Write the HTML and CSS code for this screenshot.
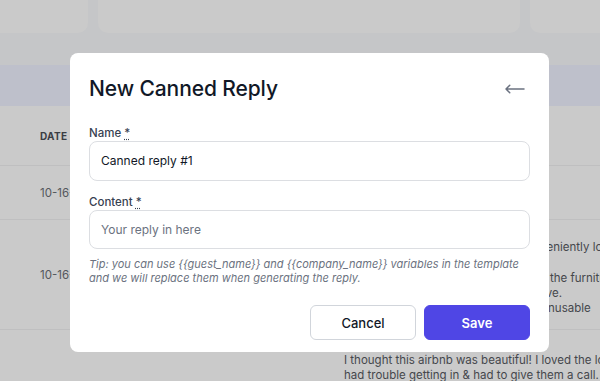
FILE: index.html
```html
<!DOCTYPE html>
<html lang="en">
<head>
<meta charset="utf-8">
<title>New Canned Reply</title>
<link rel="stylesheet" href="styles.css">
</head>
<body>
<div class="page">
  <div class="cards">
    <div class="card card-a"></div>
    <div class="card card-b"></div>
    <div class="card card-c"></div>
  </div>
  <div class="band"></div>
  <div class="table">
    <div class="row row-head">
      <div class="cell-date head">DATE</div>
      <div class="cell-review"></div>
    </div>
    <div class="row row-1">
      <div class="cell-date">10-16-2023</div>
      <div class="cell-review"></div>
    </div>
    <div class="row row-2">
      <div class="cell-date">10-16-2023</div>
      <div class="cell-review">
        <p class="line">The host was nice and the flat's conveniently located</p>
        <p class="line">near the beach.</p>
        <p class="line">Please be aware, though that most of the furniture is old</p>
        <p class="line">and the bathroom needs some real love.</p>
        <p class="line">The washing machine is completely unusable</p>
      </div>
    </div>
    <div class="row row-3">
      <div class="cell-date"></div>
      <div class="cell-review">
        <p class="line">I thought this airbnb was beautiful! I loved the location. We</p>
        <p class="line">had trouble getting in &amp; had to give them a call. Once</p>
      </div>
    </div>
  </div>

  <div class="modal">
    <div class="modal-header">
      <h2 class="modal-title">New Canned Reply</h2>
      <button class="back-btn" type="button" aria-label="Back">
        <svg width="24" height="24" viewBox="0 0 24 24" fill="none" stroke="#6b7280" stroke-width="1.5" stroke-linecap="round" stroke-linejoin="round"><path d="M6.75 15.75L3 12m0 0l3.75-3.75M3 12h18"/></svg>
      </button>
    </div>
    <div class="form">
      <div class="field">
        <label class="label">Name <abbr title="required">*</abbr></label>
        <div class="input input-value">Canned reply #1</div>
      </div>
      <div class="field field-2">
        <label class="label">Content <abbr title="required">*</abbr></label>
        <div class="input input-placeholder">Your reply in here</div>
      </div>
      <p class="tip">Tip: you can use {{guest_name}} and {{company_name}} variables in the template<br>and we will replace them when generating the reply.</p>
      <div class="actions">
        <button class="btn btn-cancel" type="button">Cancel</button>
        <button class="btn btn-save" type="button">Save</button>
      </div>
    </div>
  </div>
</div>
</body>
</html>
```

FILE: styles.css
```css
* { box-sizing: border-box; }
html, body { margin: 0; padding: 0; }
body {
  width: 600px;
  height: 381px;
  overflow: hidden;
  background: #c5c6c8;
  font-family: Inter, "Noto Sans", sans-serif;
}
.page {
  position: relative;
  width: 600px;
  height: 381px;
  overflow: hidden;
}
.cards {
  display: flex;
  gap: 10px;
  margin: -20px 0 0 -20px;
  height: 53px;
}
.card {
  background: #cacaca;
  border-radius: 10px;
  height: 53px;
}
.card-a { flex: 0 0 108px; }
.card-b { flex: 0 0 422px; }
.card-c { flex: 0 0 120px; }
.band {
  margin-top: 32px;
  height: 41px;
  background: #bec0cb;
}
.table {
  background: #cacaca;
  height: 275px;
}
.row {
  display: flex;
  border-bottom: 1px solid #bfbfc0;
}
.row-head { height: 60px; align-items: center; }
.row-1 { height: 54px; align-items: center; }
.row-2 { height: 110px; align-items: flex-start; }
.row-3 { border-bottom: none; }
.cell-date {
  flex: 0 0 344px;
  padding-left: 40px;
  font-size: 11.5px;
  color: #54575c;
  white-space: nowrap;
}
.cell-date.head {
  font-size: 10px;
  font-weight: 700;
  letter-spacing: 0.3px;
  color: #3a3d43;
}
.row-2 .cell-date { align-self: center; }
.cell-review {
  flex: 1;
  white-space: nowrap;
}
.row-2 .cell-review { padding-top: 20px; }
.row-3 .cell-review { padding-top: 23px; }
.line {
  margin: 0;
  font-size: 11.5px;
  line-height: 15.3px;
  color: #45474c;
}
.row-3 .line { line-height: 14.5px; }

.modal {
  position: absolute;
  left: 70px;
  top: 53px;
  width: 479px;
  height: 299px;
  background: #ffffff;
  border-radius: 8px;
  padding: 23px 19px 12px;
}
.modal-header {
  display: flex;
  align-items: center;
  justify-content: space-between;
  height: 26px;
}
.modal-title {
  margin: 0;
  font-size: 21px;
  line-height: 26px;
  font-weight: 500;
  color: #111827;
  letter-spacing: -0.1px;
}
.back-btn {
  border: 0;
  background: none;
  padding: 0;
  margin-right: 3px;
  width: 24px;
  height: 24px;
  display: flex;
}
.form { margin-top: 23px; }
.field-2 { margin-top: 13px; }
.label {
  display: block;
  font-size: 11.5px;
  line-height: 16px;
  font-weight: 500;
  color: #374151;
}
.label abbr {
  text-decoration: underline dotted;
  text-underline-offset: 2px;
}
.input {
  height: 39.5px;
  border: 1px solid #dcdee2;
  border-radius: 8px;
  padding: 0 11px;
  display: flex;
  align-items: center;
  font-size: 12px;
}
.input-value { color: #111827; font-weight: 400; }
.input-placeholder { color: #6b7280; }
.tip {
  margin: 8px 0 0;
  font-size: 11px;
  line-height: 14.3px;
  font-style: italic;
  color: #6b7280;
  white-space: nowrap;
}
.actions {
  display: flex;
  justify-content: flex-end;
  gap: 8px;
  margin-top: 19.5px;
}
.btn {
  width: 106px;
  height: 35px;
  border-radius: 6px;
  font-family: Inter, "Noto Sans", sans-serif;
  font-size: 13px;
}
.btn-cancel {
  background: #ffffff;
  border: 1px solid #d1d5db;
  color: #111827;
  font-weight: 500;
}
.btn-save {
  background: #4f46e5;
  border: 1px solid #4f46e5;
  color: #ffffff;
  font-weight: 600;
}
```
